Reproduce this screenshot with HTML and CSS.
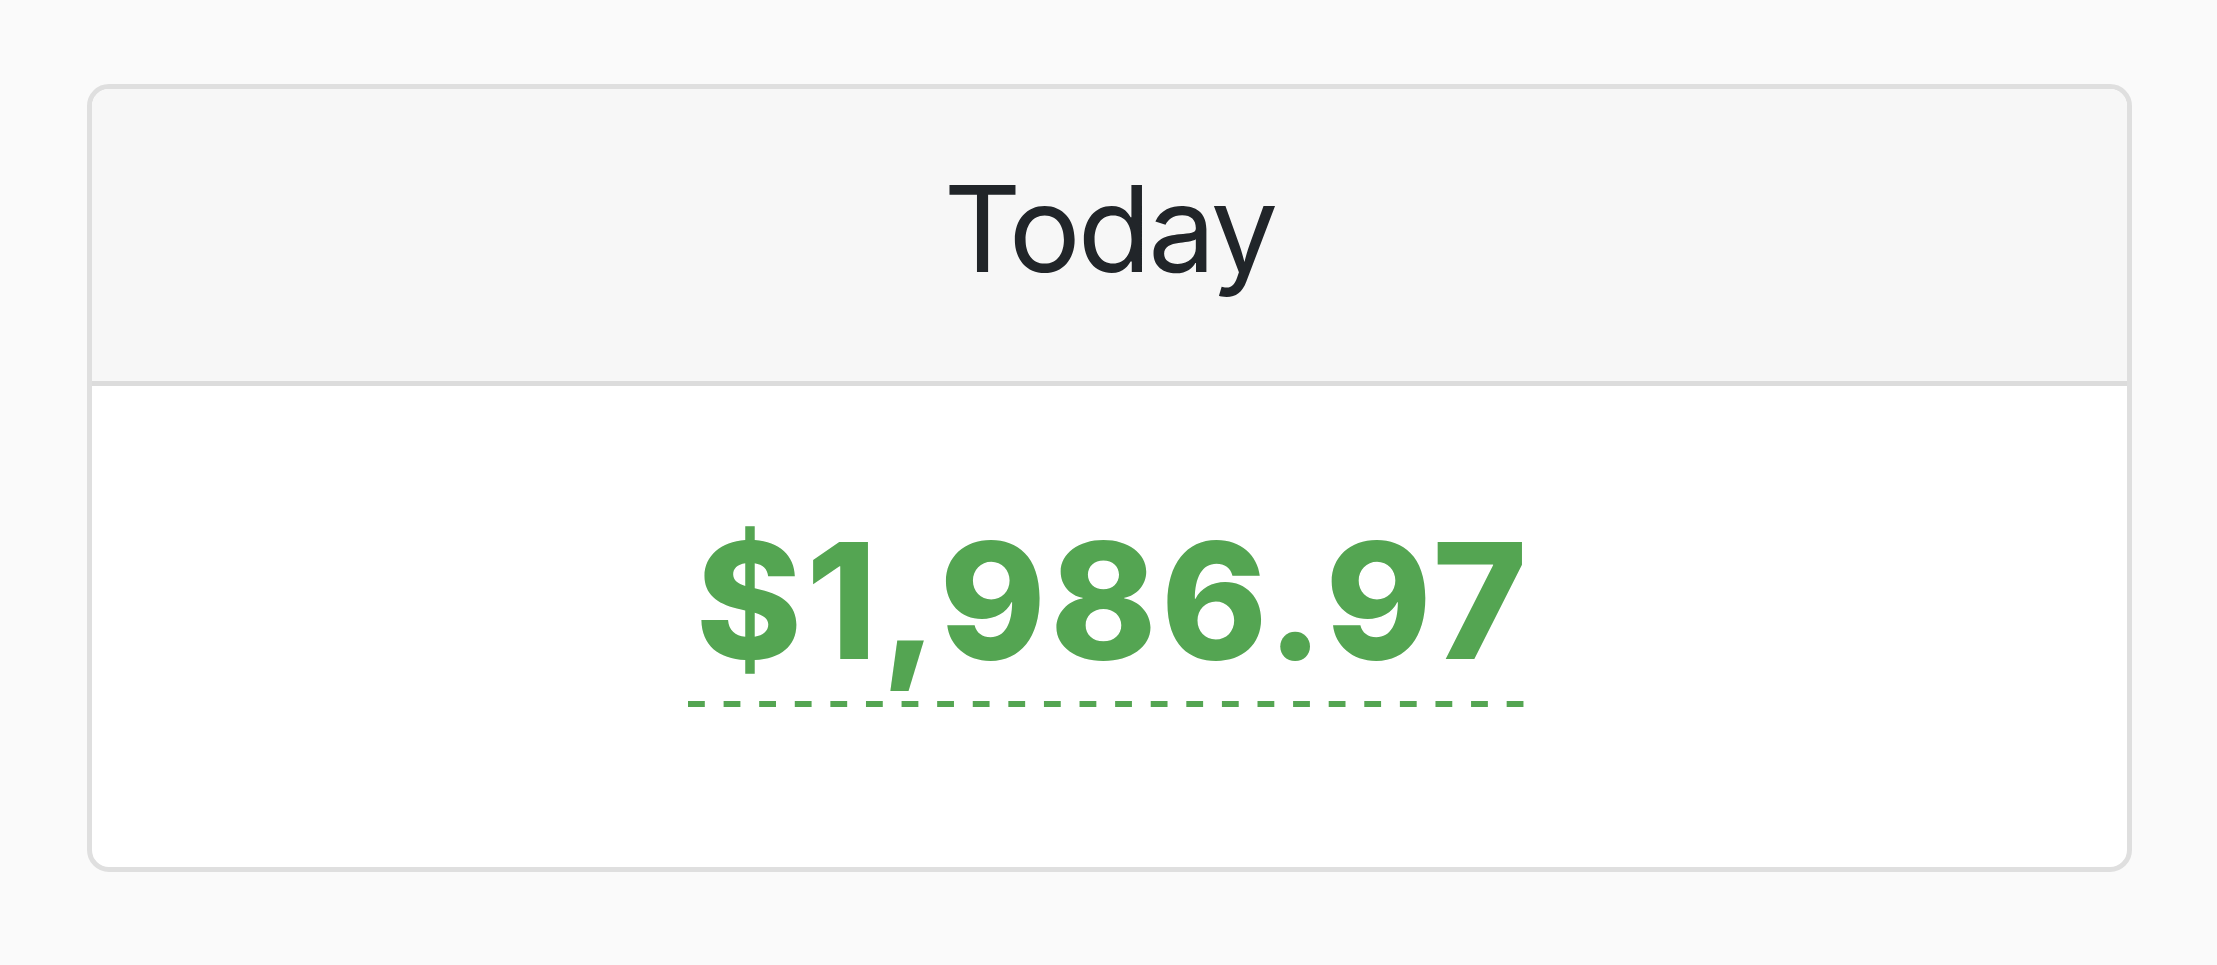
FILE: index.html
```html
<!DOCTYPE html>
<html lang="en">
<head>
<meta charset="utf-8">
<title>Today</title>
<link rel="stylesheet" href="styles.css">
</head>
<body>
  <div class="card">
    <div class="card-header">
      <h2 class="title">Today</h2>
    </div>
    <div class="card-body">
      <span class="amount">$1,986.97</span>
    </div>
  </div>
</body>
</html>
```

FILE: styles.css
```css
html, body {
  margin: 0;
  height: 100%;
}
body {
  box-sizing: border-box;
  background: #fafafa;
  padding: 84px 85px 93px 87px;
  display: flex;
  font-family: Inter, "Noto Sans", sans-serif;
}
.card {
  flex: 1;
  display: flex;
  flex-direction: column;
  border: 5px solid #dfdfdf;
  border-radius: 22px;
  overflow: hidden;
  background: #fff;
}
.card-header {
  height: 292px;
  flex: none;
  background: #f7f7f7;
  border-bottom: 5px solid #dcdcdc;
  display: flex;
  align-items: center;
  justify-content: center;
}
.title {
  margin: 0 0 12px;
  font-size: 120px;
  line-height: 1;
  font-weight: 400;
  letter-spacing: -3px;
  color: #212529;
}
.card-body {
  flex: 1;
  display: flex;
  align-items: center;
  justify-content: center;
  padding-bottom: 26px;
}
.amount {
  display: inline-block;
  font-size: 161px;
  line-height: 1;
  font-weight: 800;
  color: #54a552;
  letter-spacing: 4px;
  margin-right: -4px;
  padding: 0 4px 26px 8px;
  background-image: linear-gradient(to right, #54a552 17px, transparent 17px);
  background-size: 35.6px 6px;
  background-repeat: repeat-x;
  background-position: left bottom;
}
```
